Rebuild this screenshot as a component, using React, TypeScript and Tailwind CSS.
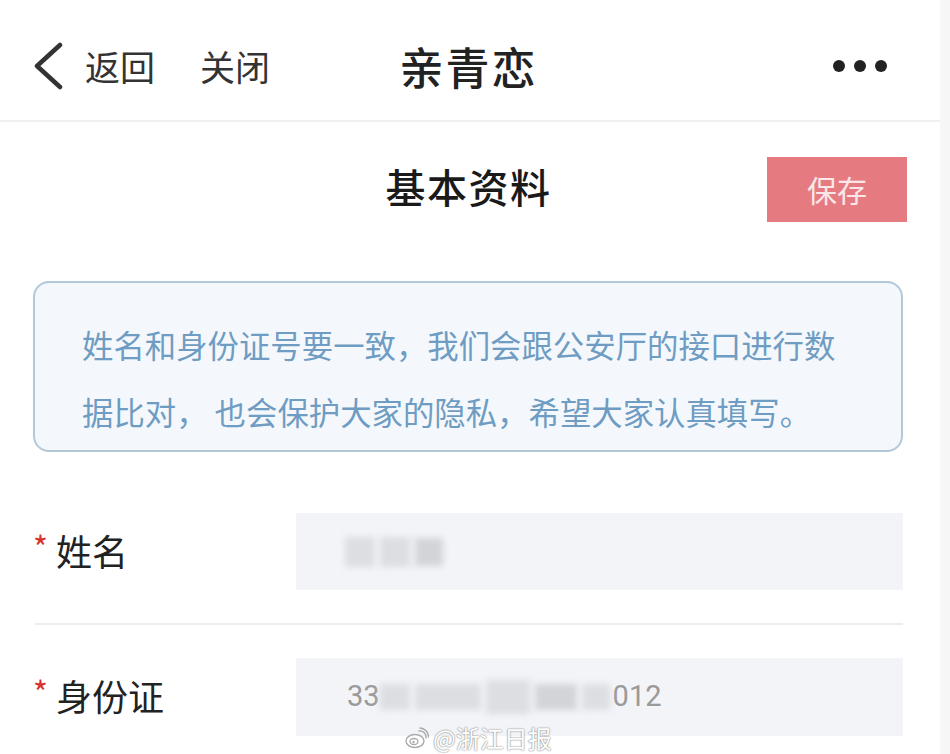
import React from 'react';

const cjk = { fontFamily: '"Noto Sans CJK SC", "Noto Sans", sans-serif' };

function Chevron() {
  return (
    <svg width="32" height="48" viewBox="0 0 32 48" className="shrink-0">
      <polyline points="27,3 4,24 27,45" fill="none" stroke="#333" strokeWidth="4.5" strokeLinecap="round" strokeLinejoin="round" />
    </svg>
  );
}

function Dots() {
  return (
    <svg width="56" height="14" viewBox="0 0 56 14">
      <circle cx="7" cy="7" r="6" fill="#222" />
      <circle cx="28" cy="7" r="6" fill="#222" />
      <circle cx="49" cy="7" r="6" fill="#222" />
    </svg>
  );
}

function WeiboMark() {
  return (
    <svg width="24" height="22" viewBox="0 0 24 22">
      <ellipse cx="10" cy="14" rx="9" ry="6.5" fill="#fff" stroke="#aaa" strokeWidth="1.4" />
      <ellipse cx="9" cy="14.5" rx="4" ry="3" fill="none" stroke="#aaa" strokeWidth="1.3" />
      <circle cx="8.5" cy="15" r="1.2" fill="#aaa" />
      <path d="M14 4 A6 6 0 0 1 21 11" fill="none" stroke="#aaa" strokeWidth="1.4" strokeLinecap="round" />
      <path d="M15 1 A9 9 0 0 1 23.5 10" fill="none" stroke="#aaa" strokeWidth="1.4" strokeLinecap="round" />
    </svg>
  );
}

function Blur({ w, h = 'h-[26px]', c = 'bg-[#dcdee2]' }: { w: string; h?: string; c?: string }) {
  return <span className={`inline-block ${w} ${h} ${c} blur-[3px] mr-[5px]`} />;
}

export default function App() {
  return (
    <div className="flex w-[950px] h-[754px] overflow-hidden bg-white" style={cjk}>
      <div className="w-[940px] flex flex-col">
        {/* top nav */}
        <header className="h-[122px] shrink-0 pt-[12px] border-b-2 border-[#f0f0f0] grid grid-cols-[1fr_auto_1fr] items-center">
          <div className="flex items-center pl-[33px] text-[35px] text-[#333]">
            <Chevron />
            <span className="ml-[20px]">返回</span>
            <span className="ml-[45px]">关闭</span>
          </div>
          <div className="text-[44px] font-medium text-[#222] tracking-[2px] -ml-[3px]">亲青恋</div>
          <div className="flex justify-end pr-[52px]">
            <Dots />
          </div>
        </header>

        {/* title row */}
        <div className="mt-[35px] h-[65px] grid grid-cols-[1fr_auto_1fr] items-center">
          <div />
          <div className="text-[40px] font-medium text-[#1a1a1a] tracking-[1.5px] -translate-y-[4px] -ml-[3px]">基本资料</div>
          <div className="flex justify-end pr-[33px]">
            <button className="w-[140px] h-[65px] bg-[#e57b81] text-[30px] text-[#fbe7e9]">保存</button>
          </div>
        </div>

        <div className="pl-[33px] pr-[37px] flex flex-col">
          {/* notice */}
          <div className="mt-[59px] h-[171px] rounded-[16px] border-2 border-[#b2c8d9] bg-[#f4f8fc] pl-[47px] pt-[28px] text-[31.4px] leading-[67px] text-[#6f9cc2]">
            姓名和身份证号要一致，我们会跟公安厅的接口进行数
            <br />
            据比对， 也会保护大家的隐私，希望大家认真填写。
          </div>

          {/* name */}
          <div className="mt-[61px] flex items-center">
            <div className="w-[263px] flex items-center text-[36px] text-[#222] -mt-[4px]">
              <span className="text-[#d9322e] text-[32px] -mt-[8px] mr-[8px]">*</span>
              姓名
            </div>
            <div className="flex-1 h-[77px] bg-[#f2f4f8] flex items-center pl-[49px]">
              <Blur w="w-[30px]" h="h-[30px]" />
              <Blur w="w-[30px]" h="h-[30px]" />
              <Blur w="w-[28px]" h="h-[28px]" c="bg-[#d2d4d8]" />
            </div>
          </div>

          <div className="mt-[33px] ml-[2px] h-[2px] bg-[#ededed]" />

          {/* id card */}
          <div className="mt-[33px] flex items-center relative">
            <div className="w-[263px] flex items-center text-[36px] text-[#222] -mt-[4px]">
              <span className="text-[#d9322e] text-[32px] -mt-[8px] mr-[8px]">*</span>
              身份证
            </div>
            <div className="flex-1 h-[78px] bg-[#f2f4f8] flex items-center pl-[51px] text-[29px] text-[#9a9a9a]" style={{ fontFamily: 'Roboto, "Noto Sans", sans-serif' }}>
              <span>33</span>
              <Blur w="w-[30px]" />
              <Blur w="w-[66px]" />
              <Blur w="w-[44px]" h="h-[34px]" />
              <Blur w="w-[42px]" c="bg-[#d2d4d8]" />
              <Blur w="w-[28px]" />
              <span className="-ml-[2px]">012</span>
            </div>
            <div className="absolute left-[372px] top-[62px] flex items-center gap-[4px] text-[24px] text-white" style={{ textShadow: '0 0 2px #888, 0 0 1px #888' }}>
              <WeiboMark />
              <span>@浙江日报</span>
            </div>
          </div>
        </div>
      </div>
      <div className="flex-1 bg-[#f6f6f6]" />
    </div>
  );
}
